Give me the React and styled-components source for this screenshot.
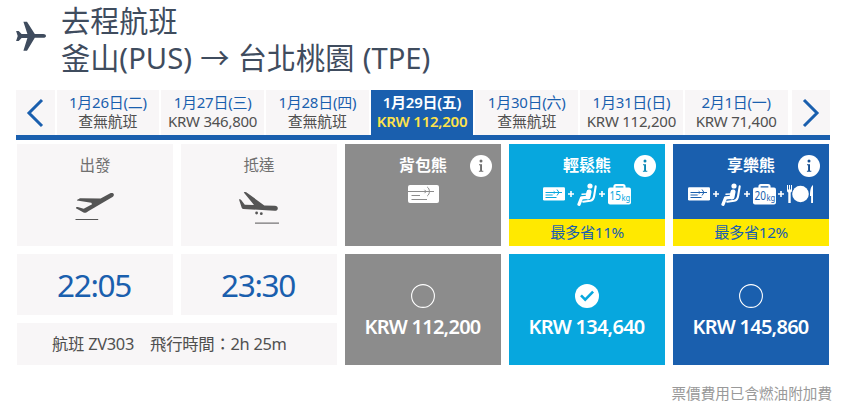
import React, { useState } from "react";
import styled, { createGlobalStyle, ThemeProvider } from "styled-components";

const theme = {
  panel: "#f8f6f7",
  navy: "#1a5fae",
  sky: "#07a7de",
  grey: "#8c8c8c",
  yellow: "#ffe900",
  title: "#3f4c5e",
  text: "#505050",
};

const infoInk = {
  grey: "#6e6e6e",
  sky: "#0a86b4",
  navy: "#154e90",
};

const days = [
  { date: "1月26日(二)", price: "查無航班" },
  { date: "1月27日(三)", price: "KRW 346,800" },
  { date: "1月28日(四)", price: "查無航班" },
  { date: "1月29日(五)", price: "KRW 112,200" },
  { date: "1月30日(六)", price: "查無航班" },
  { date: "1月31日(日)", price: "KRW 112,200" },
  { date: "2月1日(一)", price: "KRW 71,400" },
];

const fares = [
  { name: "背包熊", color: "grey", price: "KRW 112,200" },
  { name: "輕鬆熊", color: "sky", price: "KRW 134,640", bag: "15", save: "最多省11%" },
  {
    name: "享樂熊",
    color: "navy",
    price: "KRW 145,860",
    bag: "20",
    meal: true,
    save: "最多省12%",
  },
];

const PlaneIcon = () => (
  <svg width="32" height="31" viewBox="0 0 32 31" fill={theme.title}>
    <path d="M31 14.9c0 1-1.1 1.9-2.7 1.9h-8.5L12 29.8H8.4l4-12.8H6.6l-2.900 3H1.100l1.600-5.100-1.600-5h2.600l2.900 3h5.800L8.400.8H12l7.800 12.200h8.500c1.600 0 2.700.9 2.700 1.900z" />
  </svg>
);

const TakeoffIcon = () => (
  <svg width="40" height="32" viewBox="0 0 40 32" fill="#555">
    <path d="M1.900 8.900 5 7.300l20.600.3 9.200-5.200c1.800-.8 3.600-.6 4 .8.3 1.100-.3 2.100-1.300 2.700L13.200 20.200c-1.800 1.100-2.600 1.800-4.200 1.500L.9 17.200c0-1 .9-1.400 1.800-1.200l6 1.700 8.400-4.400-.8-1.600L2 9.600z" />
    <path d="M.5 28h22.700v1H.5z" />
  </svg>
);

const LandingIcon = () => (
  <svg width="42" height="34" viewBox="0 0 42 34" fill="#555">
    <path d="M5.800 1.400c1.300-.6 2.400-.3 3.500.6l17 12.400 10.500.3c2 0 3.100 1.100 3 2.700-.1 1.500-1.300 2.400-3.300 2.300L5.300 18c-.8 0-1.100-.2-1.500-.9L1 8.500c.7-.5 1.600-.4 2.200.4l3.600 4.900 9.200.2-1.400-1.800z" />
    <circle cx="18.600" cy="22" r="1.400" />
    <circle cx="23.300" cy="22.700" r="1.400" />
    <path d="M17 31.600h24v1H17z" />
  </svg>
);

const WideTicketIcon = ({ line }) => (
  <svg width="31" height="18" viewBox="0 0 31 18">
    <rect width="31" height="18" rx="2" fill="#fff" />
    <path d="M0 6.500h26M3.500 10.500H12M3.500 14.500h15.500" stroke={line} fill="none" />
    <path
      d="M16.500 4.800l1.600 1.700-1.600 1.700M19.200 2c1.500 1 2.200 2.700 2.200 4.500s-.7 3.500-2.200 4.500"
      stroke={line}
      fill="none"
    />
  </svg>
);

const TicketIcon = ({ line }) => (
  <svg width="22" height="14" viewBox="0 0 22 14">
    <rect y=".3" width="22" height="13.200" rx="1.200" fill="#fff" />
    <path d="M2.500 5.500h16.500M2.500 8h7.200M2.500 10.500h11" stroke={line} fill="none" />
    <path d="M10.700 4.300l1.300 1.200-1.300 1.200M14 2.500l2 3-2 3" stroke={line} fill="none" />
  </svg>
);

const PlusIcon = () => (
  <svg width="6" height="6" viewBox="0 0 6 6">
    <path d="M3 0v6M0 3h6" stroke="#fff" strokeWidth="1.600" />
  </svg>
);

const SeatIcon = () => (
  <svg
    width="20"
    height="23"
    viewBox="0 0 20 23"
    fill="none"
    stroke="#fff"
    strokeLinecap="round"
    strokeLinejoin="round"
  >
    <circle cx="13" cy="3" r="2.600" fill="#fff" stroke="none" />
    <path d="M11.600 9l-.8 5.400-6.200.4L2 21.300" strokeWidth="3.300" />
    <path d="M12 9l-1 5" strokeWidth="5" />
    <path d="M10 11l-5 .3" strokeWidth="1.500" />
    <path d="M18.700 3.300l-1.500 9.200c-.4 3-1.400 4.800-4 5.300l-7 .9" strokeWidth="2.100" />
  </svg>
);

const BagIcon = ({ weight, ink }) => (
  <svg width="23" height="21" viewBox="0 0 23 21">
    <path
      d="M6.500 5V2.600c0-.9.600-1.400 1.400-1.400h7.200c.8 0 1.400.5 1.400 1.400V5"
      fill="none"
      stroke="#fff"
      strokeWidth="2.200"
    />
    <rect y="3.400" width="23" height="17" rx="2" fill="#fff" />
    <text transform="translate(1.600 16.400) scale(.8 1)" fontSize="12.500" fill={ink}>
      {weight}
    </text>
    <text transform="translate(13.400 16.900) scale(.9 1)" fontSize="8.500" fill={ink}>
      kg
    </text>
  </svg>
);

const MealIcon = () => (
  <svg width="27" height="20" viewBox="0 0 27 20" fill="#fff">
    <path d="M0 1h1v4.600h1V1h1v4.600h1V1h1v5.600c0 1-.5 1.700-1.300 2V19H1.300V8.600C.5 8.300 0 7.600 0 6.600z" />
    <circle cx="13.500" cy="10" r="8.300" />
    <path d="M26 1v18h-1.900v-7H23c0-5 .6-9.500 3-11z" />
  </svg>
);

const InfoIcon = ({ ink }) => (
  <svg width="22" height="22" viewBox="0 0 22 22">
    <circle cx="11" cy="11" r="11" fill="#fff" />
    <circle cx="11" cy="6.100" r="1.500" fill={ink} />
    <path d="M9 9.200h3v6.600h1.300v1H8.900v-1h1.200v-5.600H9z" fill={ink} />
  </svg>
);

const RadioIcon = ({ checked, ink }) =>
  checked ? (
    <svg width="24" height="24" viewBox="0 0 24 24">
      <circle cx="12" cy="12" r="12" fill="#fff" />
      <path d="M6 11.400l4.200 4.200 7.900-8" fill="none" stroke={ink} strokeWidth="2.600" />
    </svg>
  ) : (
    <svg width="24" height="24" viewBox="0 0 24 24">
      <circle cx="12" cy="12" r="11.400" fill="none" stroke="#fff" strokeWidth="1.100" />
    </svg>
  );

const Chevron = ({ right }) => (
  <svg width="18" height="30" viewBox="0 0 18 30">
    <path
      d={right ? "M2 2l13 13L2 28" : "M16 2L3 15l13 13"}
      fill="none"
      stroke={theme.navy}
      strokeWidth="3"
    />
  </svg>
);

export default function App() {
  const [day, setDay] = useState(3);
  const [fare, setFare] = useState(1);

  return (
    <ThemeProvider theme={theme}>
      <GlobalStyle />
      <Page>
        <Header>
          <PlaneIcon />
          <Title>
            <div>去程航班</div>
            <div>釜山(PUS) → 台北桃園 (TPE)</div>
          </Title>
        </Header>
        <DateBar>
          <Arrow>
            <Chevron />
          </Arrow>
          <Days>
            {days.map((d, i) => (
              <Day key={d.date} $active={i === day} onClick={() => setDay(i)}>
                <span>{d.date}</span>
                <DayPrice $active={i === day}>{d.price}</DayPrice>
              </Day>
            ))}
          </Days>
          <Arrow>
            <Chevron right />
          </Arrow>
        </DateBar>
        <Board>
          <Leg>
            <span>出發</span>
            <TakeoffIcon />
          </Leg>
          <Leg>
            <span>抵達</span>
            <LandingIcon />
          </Leg>
          {fares.map((f) => (
            <FareHead key={f.name} $color={f.color}>
              <FareName>{f.name}</FareName>
              <Info>
                <InfoIcon ink={infoInk[f.color]} />
              </Info>
              <Perks>
                {f.bag ? (
                  <>
                    <TicketIcon line={theme[f.color]} />
                    <PlusIcon />
                    <SeatIcon />
                    <PlusIcon />
                    <BagIcon weight={f.bag} ink={theme[f.color]} />
                  </>
                ) : (
                  <WideTicketIcon line={theme[f.color]} />
                )}
                {f.meal && (
                  <>
                    <PlusIcon />
                    <MealIcon />
                  </>
                )}
              </Perks>
              {f.save && <Save>{f.save}</Save>}
            </FareHead>
          ))}
          <Schedule>
            <Time>22:05</Time>
            <Time>23:30</Time>
            <Flight>航班 ZV303　飛行時間：2h 25m</Flight>
          </Schedule>
          {fares.map((f, i) => (
            <Fare key={f.name} $color={f.color} onClick={() => setFare(i)}>
              <RadioIcon checked={i === fare} ink={theme[f.color]} />
              <span>{f.price}</span>
            </Fare>
          ))}
        </Board>
        <Note>票價費用已含燃油附加費</Note>
      </Page>
    </ThemeProvider>
  );
}

const GlobalStyle = createGlobalStyle`
  * {
    box-sizing: border-box;
  }

  body {
    margin: 0;
    background: #fff;
    font-family: "Noto Sans", "Noto Sans CJK TC", sans-serif;
    color: #505050;
  }

  svg {
    display: block;
    flex: none;
  }
`;

const Page = styled.div`
  width: 852px;
  height: 408px;
  padding: 3px 20px 0 16px;
  overflow: hidden;
  white-space: nowrap;
`;

const Header = styled.div`
  height: 87px;
  display: flex;

  svg {
    margin: 18px 14px 0 -1px;
  }
`;

const Title = styled.div`
  font-size: 29.2px;
  line-height: 37px;
  word-spacing: 0.7px;
  color: ${(props) => props.theme.title};
`;

const DateBar = styled.div`
  width: 814px;
  height: 50px;
  display: flex;
  justify-content: space-between;
  border-bottom: 5px solid ${(props) => props.theme.navy};
`;

const Arrow = styled.div`
  width: 38.5px;
  display: flex;
  align-items: center;
  justify-content: center;
  background: ${(props) => props.theme.panel};
`;

const Days = styled.div`
  width: 731px;
  margin-right: 2px;
  display: grid;
  grid-template-columns: repeat(7, 1fr);
  column-gap: 2px;
`;

const Day = styled.div`
  padding-top: 3px;
  display: flex;
  flex-direction: column;
  align-items: center;
  font-size: 15px;
  line-height: 19px;
  letter-spacing: -0.25px;
  cursor: pointer;
  font-weight: ${(props) => (props.$active ? 600 : 400)};
  color: ${(props) => (props.$active ? "#fff" : props.theme.navy)};
  background: ${(props) =>
    props.$active ? props.theme.navy : props.theme.panel};
`;

const DayPrice = styled.span`
  color: ${(props) => (props.$active ? "#ffe34a" : props.theme.text)};
`;

const Board = styled.div`
  margin: 4px 0 0 1px;
  display: grid;
  grid-template-columns: repeat(5, 156px);
  grid-template-rows: 102px 111px;
  gap: 8px;
`;

const Leg = styled.div`
  padding-top: 10px;
  display: flex;
  flex-direction: column;
  align-items: center;
  font-size: 15.5px;
  line-height: 22px;
  color: #707070;
  background: ${(props) => props.theme.panel};

  svg {
    margin-top: 15px;
  }
`;

const FareHead = styled.div`
  position: relative;
  padding-top: 10px;
  display: flex;
  flex-direction: column;
  align-items: center;
  color: #fff;
  background: ${(props) => props.theme[props.$color]};
`;

const FareName = styled.div`
  font-size: 16px;
  line-height: 22px;
  font-weight: 600;
`;

const Info = styled.div`
  position: absolute;
  top: 11px;
  right: 9px;
`;

const Perks = styled.div`
  height: 36px;
  display: flex;
  align-items: center;
  gap: 2.7px;
`;

const Save = styled.div`
  width: 100%;
  height: 27px;
  margin-top: auto;
  font-size: 15.3px;
  line-height: 26px;
  letter-spacing: -0.4px;
  text-align: center;
  color: ${(props) => props.theme.navy};
  background: ${(props) => props.theme.yellow};
`;

const Schedule = styled.div`
  grid-column: span 2;
  display: grid;
  grid-template-columns: 1fr 1fr;
  grid-template-rows: 61px 42px;
  gap: 8px;
`;

const Time = styled.div`
  font-size: 31.5px;
  line-height: 62px;
  letter-spacing: -1.3px;
  padding-right: 2px;
  text-align: center;
  color: ${(props) => props.theme.navy};
  background: ${(props) => props.theme.panel};
`;

const Flight = styled.div`
  grid-column: span 2;
  padding-left: 35px;
  font-size: 16.4px;
  line-height: 41px;
  letter-spacing: -0.3px;
  background: ${(props) => props.theme.panel};
`;

const Fare = styled.div`
  padding: 30px 1px 0 0;
  display: flex;
  flex-direction: column;
  align-items: center;
  gap: 5px;
  font-size: 20px;
  line-height: 28px;
  letter-spacing: -0.75px;
  font-weight: 600;
  color: #fff;
  cursor: pointer;
  background: ${(props) => props.theme[props.$color]};
`;

const Note = styled.div`
  margin-top: 17px;
  font-size: 14.6px;
  line-height: 22px;
  text-align: right;
  color: #999;
`;
